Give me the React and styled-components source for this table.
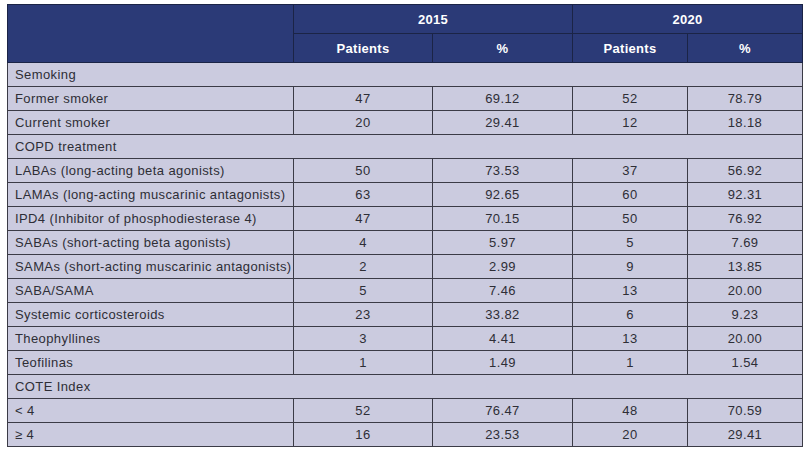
import React from 'react'
import styled, { createGlobalStyle } from 'styled-components'

const GlobalStyle = createGlobalStyle`
    html, body {
        margin: 0;
        padding: 0;
        background: #ffffff;
    }
    body {
        font-family: 'Liberation Sans', Arial, sans-serif;
    }
`

const Page = styled.div`
    padding: 4px 6px 0 7px;
`

const Table = styled.table`
    border-collapse: collapse;
    table-layout: fixed;
    width: 795px;
    font-size: 13px;
    letter-spacing: 0.4px;
    color: #2e2e36;
`

const HeadCell = styled.th`
    background: #2b3a77;
    color: #ffffff;
    font-weight: bold;
    font-size: 13px;
    letter-spacing: 0.3px;
    height: 28px;
    padding: 0;
    text-align: center;
    border: 1px solid #1b2446;
`

const SectionCell = styled.td`
    background: #cbcbdf;
    height: 23px;
    padding: 0 0 0 7px;
    border: 1px solid #3b3b46;
`

const LabelCell = styled.td`
    background: #cbcbdf;
    height: 23px;
    padding: 0 0 0 7px;
    border: 1px solid #3b3b46;
    white-space: nowrap;
`

const ValueCell = styled.td`
    background: #cbcbdf;
    height: 23px;
    padding: 0;
    text-align: center;
    border: 1px solid #3b3b46;
`

const sections = [
    {
        title: 'Semoking',
        rows: [
            ['Former smoker', '47', '69.12', '52', '78.79'],
            ['Current smoker', '20', '29.41', '12', '18.18'],
        ],
    },
    {
        title: 'COPD treatment',
        rows: [
            ['LABAs (long-acting beta agonists)', '50', '73.53', '37', '56.92'],
            ['LAMAs (long-acting muscarinic antagonists)', '63', '92.65', '60', '92.31'],
            ['IPD4 (Inhibitor of phosphodiesterase 4)', '47', '70.15', '50', '76.92'],
            ['SABAs (short-acting beta agonists)', '4', '5.97', '5', '7.69'],
            ['SAMAs (short-acting muscarinic antagonists)', '2', '2.99', '9', '13.85'],
            ['SABA/SAMA', '5', '7.46', '13', '20.00'],
            ['Systemic corticosteroids', '23', '33.82', '6', '9.23'],
            ['Theophyllines', '3', '4.41', '13', '20.00'],
            ['Teofilinas', '1', '1.49', '1', '1.54'],
        ],
    },
    {
        title: 'COTE Index',
        rows: [
            ['< 4', '52', '76.47', '48', '70.59'],
            ['≥ 4', '16', '23.53', '20', '29.41'],
        ],
    },
]

const App = () => {
    return (
        <Page>
            <GlobalStyle />
            <Table>
                <colgroup>
                    <col style={{ width: 286 }} />
                    <col style={{ width: 139 }} />
                    <col style={{ width: 140 }} />
                    <col style={{ width: 115 }} />
                    <col style={{ width: 115 }} />
                </colgroup>
                <thead>
                    <tr>
                        <HeadCell rowSpan={2} />
                        <HeadCell colSpan={2}>2015</HeadCell>
                        <HeadCell colSpan={2}>2020</HeadCell>
                    </tr>
                    <tr>
                        <HeadCell>Patients</HeadCell>
                        <HeadCell>%</HeadCell>
                        <HeadCell>Patients</HeadCell>
                        <HeadCell>%</HeadCell>
                    </tr>
                </thead>
                <tbody>
                    {sections.map(section => (
                        <React.Fragment key={section.title}>
                            <tr>
                                <SectionCell colSpan={5}>{section.title}</SectionCell>
                            </tr>
                            {section.rows.map(row => (
                                <tr key={row[0]}>
                                    <LabelCell>{row[0]}</LabelCell>
                                    {row.slice(1).map((value, i) => (
                                        <ValueCell key={i}>{value}</ValueCell>
                                    ))}
                                </tr>
                            ))}
                        </React.Fragment>
                    ))}
                </tbody>
            </Table>
        </Page>
    )
}

export default App
